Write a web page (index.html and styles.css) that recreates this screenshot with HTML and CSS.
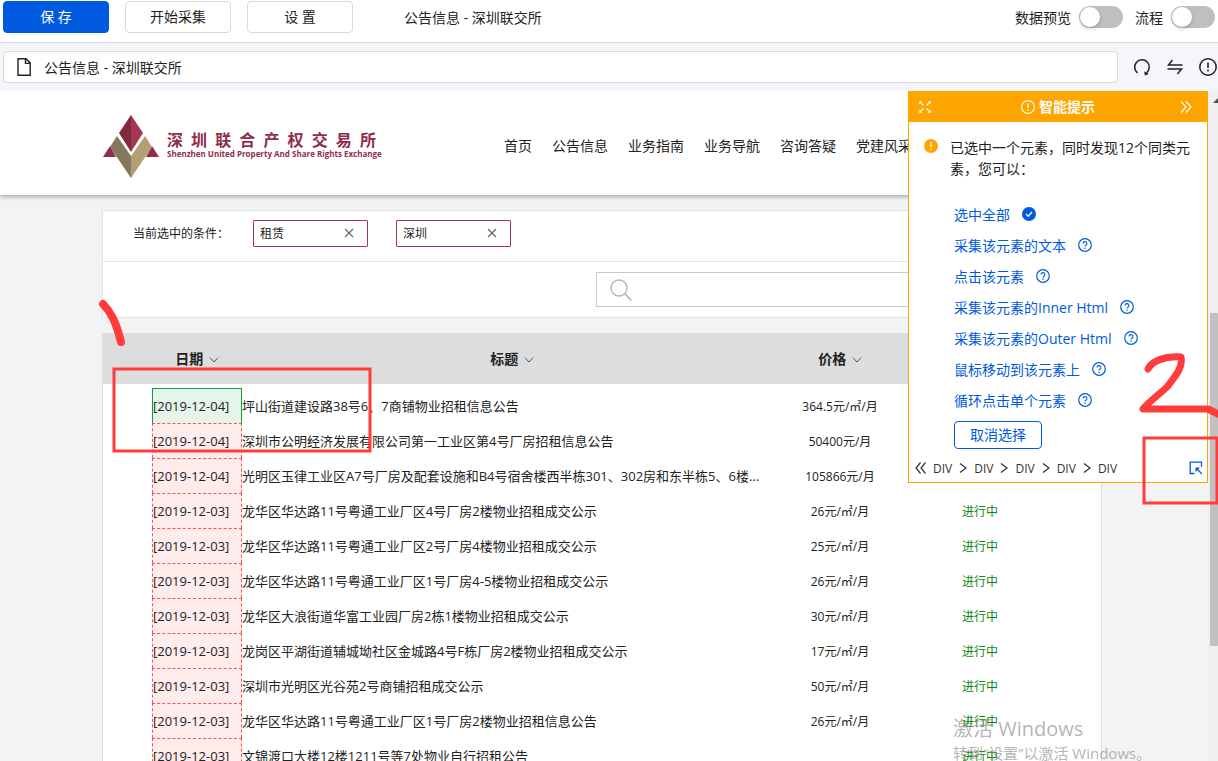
FILE: index.html
```html
<!DOCTYPE html>
<html lang="zh-CN">
<head>
    <meta charset="UTF-8">
    <meta name="viewport" content="width=device-width, initial-scale=1.0">
    <link rel="stylesheet" href="styles.css">
    <title>公告信息 - 深圳联交所</title>
</head>
<body>

    <svg class="sprite" aria-hidden="true">
        <symbol id="help" viewBox="0 0 14 14">
            <circle cx="7" cy="7" r="6.3" fill="none" stroke="currentColor" stroke-width="1.2"/>
            <path d="M5.1 5.6a1.9 1.9 0 1 1 2.8 1.6c-.6.3-.9.6-.9 1.3" fill="none" stroke="currentColor" stroke-width="1.1"/>
            <circle cx="7" cy="10.2" r=".75" fill="currentColor"/>
        </symbol>
        <symbol id="down" viewBox="0 0 10 6">
            <path d="M1 .7l4 4.3 4-4.3" fill="none" stroke="currentColor"/>
        </symbol>
        <symbol id="close" viewBox="0 0 10 10">
            <path d="M1 1l8 8M9 1L1 9" fill="none" stroke="currentColor" stroke-width="1.2"/>
        </symbol>
        <symbol id="next" viewBox="0 0 8 12">
            <path d="M1 1.5L7 6l-6 4.5" fill="none" stroke="currentColor" stroke-width="1.3"/>
        </symbol>
    </svg>

    <header class="toolbar">
        <button class="btn btn-primary">保 存</button>
        <button class="btn">开始采集</button>
        <button class="btn">设 置</button>
        <span class="task-name">公告信息 - 深圳联交所</span>
        <div class="switches">
            <label class="switch">数据预览 <input type="checkbox"></label>
            <label class="switch">流程 <input type="checkbox"></label>
        </div>
    </header>

    <div class="address-bar">
        <div class="address">
            <svg width="16" height="20" viewBox="0 0 16 20">
                <path d="M2 1.7h8l4.2 4.2v12.4H2z M9.5 1.7v4.7h4.7" fill="none" stroke="#222" stroke-width="1.4"/>
            </svg>
            <input type="text" aria-label="网址" value="公告信息 - 深圳联交所">
        </div>
        <button class="icon-btn" aria-label="刷新">
            <svg width="18" height="18" viewBox="0 0 18 18">
                <path d="M4.6 15A7.3 7.3 0 1 1 13.6 14.800" fill="none" stroke="#222" stroke-width="1.5"/>
                <path d="M11.200 13.200l.6 4.200 4-1.400z" fill="#222"/>
            </svg>
        </button>
        <button class="icon-btn" aria-label="切换">
            <svg width="18" height="18" viewBox="0 0 18 18">
                <path d="M16.500 7H2.500L6.500 2M1.500 11H15.500l-4 5" fill="none" stroke="#222" stroke-width="1.5"/>
            </svg>
        </button>
        <button class="icon-btn" aria-label="提示">
            <svg width="18" height="18" viewBox="0 0 18 18">
                <circle cx="9" cy="9" r="8.2" fill="none" stroke="#222" stroke-width="1.5"/>
                <path d="M9 4.500v5.600M9 11.600v1.800" stroke="#222" stroke-width="1.6"/>
            </svg>
        </button>
    </div>

    <div class="browser">
        <main class="site">
            <div class="site-header">
                <div class="wrap">
                    <a class="logo" href="#">
                        <svg width="56" height="64" viewBox="0 0 56 64">
                            <path d="M28 0v37L16 18z" fill="#7e2b3e"/>
                            <path d="M28 0v37l12-19z" fill="#a33755"/>
                            <path d="M7 31L0 42h13z M49 31l7 11H43z" fill="#8f2d4a"/>
                            <path d="M14 21l14 20v22L7 32z" fill="#85775c"/>
                            <path d="M42 21L28 41v22l21-31z" fill="#b39e76"/>
                        </svg>
                        <span class="logo-text">
                            <span class="logo-cn"><b>深</b><b>圳</b><b>联</b><b>合</b><b>产</b><b>权</b><b>交</b><b>易</b><b>所</b></span>
                            <span class="logo-en">Shenzhen United Property And Share Rights Exchange</span>
                        </span>
                    </a>
                    <nav class="site-nav">
                        <a href="#">首页</a>
                        <a href="#">公告信息</a>
                        <a href="#">业务指南</a>
                        <a href="#">业务导航</a>
                        <a href="#">咨询答疑</a>
                        <a href="#">党建风采</a>
                    </nav>
                </div>
            </div>

            <section class="wrap filters">
                <div class="filter-row">
                    <span class="filter-label">当前选中的条件：</span>
                    <button class="tag">租赁 <svg width="10" height="10"><use href="#close"/></svg></button>
                    <button class="tag">深圳 <svg width="10" height="10"><use href="#close"/></svg></button>
                </div>
                <div class="search-row">
                    <div class="search">
                        <svg width="22" height="22" viewBox="0 0 22 22">
                            <circle cx="9" cy="9" r="8" fill="none" stroke="#b5b8bb" stroke-width="1.5"/>
                            <path d="M14.600 14.600L21.300 21.300" stroke="#b5b8bb" stroke-width="1.7"/>
                        </svg>
                        <input type="search" aria-label="搜索">
                    </div>
                </div>
            </section>

            <table class="wrap notices">
                <thead>
                    <tr>
                        <th class="col-date">日期 <svg width="10" height="6"><use href="#down"/></svg></th>
                        <th class="col-title">标题 <svg width="10" height="6"><use href="#down"/></svg></th>
                        <th class="col-price">价格 <svg width="10" height="6"><use href="#down"/></svg></th>
                        <th class="col-status"></th>
                    </tr>
                </thead>
                <tbody>
                    <tr><td class="col-date"><div class="date selected">[2019-12-04]</div></td><td class="col-title">坪山街道建设路38号6、7商铺物业招租信息公告</td><td class="col-price">364.5元/㎡/月</td><td class="col-status"></td></tr>
                    <tr><td class="col-date"><div class="date">[2019-12-04]</div></td><td class="col-title">深圳市公明经济发展有限公司第一工业区第4号厂房招租信息公告</td><td class="col-price">50400元/月</td><td class="col-status"></td></tr>
                    <tr><td class="col-date"><div class="date">[2019-12-04]</div></td><td class="col-title">光明区玉律工业区A7号厂房及配套设施和B4号宿舍楼西半栋301、302房和东半栋5、6楼...</td><td class="col-price">105866元/月</td><td class="col-status"></td></tr>
                    <tr><td class="col-date"><div class="date">[2019-12-03]</div></td><td class="col-title">龙华区华达路11号粤通工业厂区4号厂房2楼物业招租成交公示</td><td class="col-price">26元/㎡/月</td><td class="col-status">进行中</td></tr>
                    <tr><td class="col-date"><div class="date">[2019-12-03]</div></td><td class="col-title">龙华区华达路11号粤通工业厂区2号厂房4楼物业招租成交公示</td><td class="col-price">25元/㎡/月</td><td class="col-status">进行中</td></tr>
                    <tr><td class="col-date"><div class="date">[2019-12-03]</div></td><td class="col-title">龙华区华达路11号粤通工业厂区1号厂房4-5楼物业招租成交公示</td><td class="col-price">26元/㎡/月</td><td class="col-status">进行中</td></tr>
                    <tr><td class="col-date"><div class="date">[2019-12-03]</div></td><td class="col-title">龙华区大浪街道华富工业园厂房2栋1楼物业招租成交公示</td><td class="col-price">30元/㎡/月</td><td class="col-status">进行中</td></tr>
                    <tr><td class="col-date"><div class="date">[2019-12-03]</div></td><td class="col-title">龙岗区平湖街道辅城坳社区金城路4号F栋厂房2楼物业招租成交公示</td><td class="col-price">17元/㎡/月</td><td class="col-status">进行中</td></tr>
                    <tr><td class="col-date"><div class="date">[2019-12-03]</div></td><td class="col-title">深圳市光明区光谷苑2号商铺招租成交公示</td><td class="col-price">50元/㎡/月</td><td class="col-status">进行中</td></tr>
                    <tr><td class="col-date"><div class="date">[2019-12-03]</div></td><td class="col-title">龙华区华达路11号粤通工业厂区1号厂房2楼物业招租信息公告</td><td class="col-price">26元/㎡/月</td><td class="col-status">进行中</td></tr>
                    <tr><td class="col-date"><div class="date">[2019-12-03]</div></td><td class="col-title">文锦渡口大楼12楼1211号等7处物业自行招租公告</td><td class="col-price"></td><td class="col-status">进行中</td></tr>
                </tbody>
            </table>

            <aside class="tips">
                <div class="tips-header">
                    <button aria-label="缩小">
                        <svg width="14" height="14" viewBox="0 0 14 14" fill="none" stroke="#fff" stroke-width="1.200">
                            <path d="M2 2l3.500 3.500M12 2L8.500 5.500M2 12l3.500-3.500M12 12L8.500 8.500"/>
                            <path d="M1.500 4V1.500H4M10 1.500h2.500V4M1.500 10v2.500H4M10 12.500h2.500V10" stroke-opacity=".6"/>
                        </svg>
                    </button>
                    <span class="tips-title">
                        <svg width="14" height="14" viewBox="0 0 14 14">
                            <circle cx="7" cy="7" r="6.4" fill="none" stroke="#fff" stroke-width="1.100"/>
                            <path d="M7 3.500v4.500M7 9.200v1.500" stroke="#fff" stroke-width="1.200"/>
                        </svg>
                        智能提示
                    </span>
                    <button aria-label="收起">
                        <svg width="12" height="12" viewBox="0 0 12 12">
                            <path d="M1 .5L6 6l-5 5.500M6 .5L11 6l-5 5.500" fill="none" stroke="#fff" stroke-width="1.200"/>
                        </svg>
                    </button>
                </div>
                <div class="tips-message">
                    <svg width="14" height="14" viewBox="0 0 14 14">
                        <circle cx="7" cy="7" r="7" fill="#ffa500"/>
                        <path d="M7 3v5M7 9.500v1.500" stroke="#fff" stroke-width="1.300"/>
                    </svg>
                    <p>已选中一个元素，同时发现12个同类元素，您可以：</p>
                </div>
                <ul class="tips-list">
                    <li>
                        <a href="#">选中全部</a>
                        <svg width="14" height="14" viewBox="0 0 14 14">
                            <circle cx="7" cy="7" r="7" fill="currentColor"/>
                            <path d="M4 7l2.300 2.300L10 5" fill="none" stroke="#fff" stroke-width="1.400"/>
                        </svg>
                    </li>
                    <li><a href="#">采集该元素的文本</a> <svg width="14" height="14"><use href="#help"/></svg></li>
                    <li><a href="#">点击该元素</a> <svg width="14" height="14"><use href="#help"/></svg></li>
                    <li><a href="#">采集该元素的Inner Html</a> <svg width="14" height="14"><use href="#help"/></svg></li>
                    <li><a href="#">采集该元素的Outer Html</a> <svg width="14" height="14"><use href="#help"/></svg></li>
                    <li><a href="#">鼠标移动到该元素上</a> <svg width="14" height="14"><use href="#help"/></svg></li>
                    <li><a href="#">循环点击单个元素</a> <svg width="14" height="14"><use href="#help"/></svg></li>
                </ul>
                <button class="cancel">取消选择</button>
                <div class="dom-path">
                    <svg width="11" height="12" viewBox="0 0 11 12">
                        <path d="M5.500 .5L1 6l4.500 5.500M10.500 .5L6 6l4.500 5.500" fill="none" stroke="currentColor" stroke-width="1.200"/>
                    </svg>
                    <span>DIV</span>
                    <svg width="8" height="12"><use href="#next"/></svg>
                    <span>DIV</span>
                    <svg width="8" height="12"><use href="#next"/></svg>
                    <span>DIV</span>
                    <svg width="8" height="12"><use href="#next"/></svg>
                    <span>DIV</span>
                    <svg width="8" height="12"><use href="#next"/></svg>
                    <span>DIV</span>
                    <button class="expand" aria-label="扩大选区">
                        <svg width="14" height="14" viewBox="0 0 14 14">
                            <path d="M5.500 12.500H1.200V1.200h11.300v4.500" fill="none" stroke="currentColor" stroke-width="1.300"/>
                            <path d="M7.500 7.500l5.500 5.500" fill="none" stroke="currentColor" stroke-width="1.300"/>
                            <path d="M6.500 6.500h4.500l-4.500 4.500z" fill="currentColor"/>
                        </svg>
                    </button>
                </div>
            </aside>
        </main>

        <div class="scrollbar">
            <svg width="10" height="5" viewBox="0 0 10 5"><path d="M3 5l5-5 2 2v3z" fill="#505050"/></svg>
            <div class="thumb"></div>
        </div>
    </div>

    <div class="watermark">
        <div class="watermark-title">激活 Windows</div>
        <div>转到“设置”以激活 Windows。</div>
    </div>

    <!-- hand-drawn marks over the page -->
    <svg class="marks" width="1218" height="761" fill="none" stroke="#ff3b3b">
        <path d="M103 304C111 312 116 322 121 342" stroke-width="8" stroke-linecap="round"/>
        <rect x="114" y="369" width="256" height="82" stroke-width="3"/>
        <path d="M1148 369C1152 361 1164 356 1181 357C1183 366 1178 373 1167 387C1157 396 1148 403 1143 409H1208L1218 414" stroke-width="7" stroke-linecap="round" stroke-linejoin="round"/>
        <rect x="1144" y="438" width="73" height="65" stroke-width="3"/>
    </svg>

</body>
</html>
```
FILE: styles.css
```css
* {
    box-sizing: border-box;
}

body {
    margin: 0;
    height: 100vh;
    display: flex;
    flex-direction: column;
    overflow: hidden;
    position: relative;
    font-family: "Open Sans", "Noto Sans CJK SC", sans-serif;
    font-size: 14px;
    color: #222;
    background-color: #fff;
}

button, input {
    font: inherit;
    color: inherit;
}

button {
    padding: 0;
    border: none;
    background: none;
    cursor: pointer;
}

svg {
    flex: none;
}

a {
    color: inherit;
    text-decoration: none;
}

.sprite {
    display: none;
}

/* top toolbar */
.toolbar {
    flex: none;
    display: flex;
    align-items: center;
    gap: 16px;
    height: 43px;
    padding: 0 3px 8px;
    border-bottom: 1px solid #d9d9d9;
}

.btn {
    width: 106px;
    height: 32px;
    padding-bottom: 2px;
    border: 1px solid #d9d9d9;
    border-radius: 4px;
    background-color: #fff;
}

.btn-primary {
    color: #fff;
    border-color: #005ae0;
    background-color: #005ae0;
}

.task-name {
    margin-left: 35px;
}

.switches {
    display: flex;
    gap: 12px;
    margin-left: auto;
}

.switch {
    display: flex;
    align-items: center;
    gap: 8px;
}

.switch input {
    appearance: none;
    width: 44px;
    height: 22px;
    margin: 0;
    padding: 1px;
    border-radius: 11px;
    background-color: #bfbfbf;
}

.switch input::before {
    content: "";
    display: block;
    width: 20px;
    height: 20px;
    border-radius: 50%;
    background-color: #fff;
    box-shadow: 0 2px 4px rgba(0, 35, 11, 0.2);
}

.switch input:checked {
    background-color: #005ae0;
}

/* address bar */
.address-bar {
    flex: none;
    display: flex;
    align-items: center;
    gap: 15px;
    height: 48px;
    padding: 0 1px 0 3px;
    background-color: #f5f6fb;
}

.address {
    flex: 1;
    display: flex;
    align-items: center;
    gap: 12px;
    height: 32px;
    padding: 0 12px;
    border: 1px solid #d9d9d9;
    border-radius: 4px;
    background-color: #fff;
}

.address input {
    flex: 1;
    padding: 0;
    border: none;
    outline: none;
    background: none;
}

.icon-btn {
    display: flex;
}

/* embedded browser */
.browser {
    flex: 1;
    display: flex;
    min-height: 0;
}

.site {
    flex: 1;
    position: relative;
    overflow: hidden;
    padding-right: 4px;
    background-color: #f3f3f3;
}

.wrap {
    width: calc(100% - 204px);
    max-width: 1000px;
    margin: 0 auto;
}

.site-header {
    height: 104px;
    margin: 0 -4px 15px 0;
    padding-right: 4px;
    background-color: #fff;
    box-shadow: 0 1px 5px rgba(0, 0, 0, 0.4);
}

.site-header .wrap {
    display: flex;
    align-items: center;
    height: 100%;
    padding-top: 8px;
}

.logo {
    display: flex;
    align-items: center;
    gap: 8px;
    margin-left: 1px;
    color: #8f2d4a;
}

.logo-text {
    width: 213px;
    padding-bottom: 2px;
}

.logo-cn {
    display: flex;
    justify-content: space-between;
    padding-right: 4px;
    font-size: 16px;
    line-height: 16px;
}

.logo-en {
    display: block;
    font-size: 8px;
    font-weight: bold;
    line-height: 12px;
    white-space: nowrap;
}

.site-nav {
    display: flex;
    gap: 20px;
    margin-left: 124px;
    padding-bottom: 4px;
    white-space: nowrap;
}

.filters {
    margin-bottom: 15px;
    border: 1px solid #e3e3e3;
    background-color: #fff;
}

.filter-row {
    display: flex;
    align-items: center;
    gap: 28px;
    height: 51px;
    padding: 0 30px 6px;
    border-bottom: 1px solid #e8e8e8;
    font-size: 12px;
}

.filter-label {
    width: 92px;
    white-space: nowrap;
}

.tag {
    display: flex;
    align-items: center;
    justify-content: space-between;
    width: 115px;
    height: 27px;
    padding: 0 13px 0 6px;
    border: 1px solid #a33755;
    border-radius: 1px;
    background-color: #fff;
}

.tag svg {
    color: #666;
}

.search-row {
    display: flex;
    justify-content: flex-end;
    padding: 10px;
}

.search {
    display: flex;
    align-items: center;
    gap: 10px;
    width: 495px;
    height: 35px;
    padding: 0 13px;
    border: 1px solid #c8c8c8;
}

.search input {
    flex: 1;
    border: none;
    outline: none;
}

/* notice table */
.notices {
    table-layout: fixed;
    border-spacing: 0;
    border: 1px solid #ddd;
    background-color: #fff;
    font-size: 13px;
}

.notices th {
    height: 50px;
    padding: 0 0 2px;
    font-size: 14px;
    background-color: #ddd;
}

.notices th svg {
    margin: 0 0 1px 2px;
    color: #555;
}

.notices tbody::before {
    content: "";
    display: block;
    height: 4px;
}

.notices td {
    height: 35px;
    padding: 0;
    text-align: center;
    white-space: nowrap;
}

.notices .col-date {
    width: 139px;
    padding-left: 49px;
}

.notices td.col-title {
    padding-right: 20px;
    text-align: left;
    overflow: hidden;
    text-overflow: ellipsis;
}

.notices .col-price {
    width: 116px;
}

.notices td.col-price {
    font-size: 12px;
}

.notices .col-status {
    width: 203px;
    padding-right: 39px;
    color: #0a8a0a;
    font-size: 12px;
}

.date {
    height: 35px;
    border: 1px dashed #ff5050;
    border-bottom: none;
    background-color: #ffecec;
    line-height: 34px;
    text-align: left;
}

.date.selected {
    border: 1px solid #0aa03c;
    border-bottom: none;
    background-color: #e6f5ea;
}

/* tips panel */
.tips {
    position: absolute;
    top: 0;
    right: 0;
    width: 300px;
    border: 1px solid #ffa500;
    background-color: #fff;
}

.tips-header {
    display: flex;
    align-items: center;
    justify-content: space-between;
    height: 30px;
    padding: 0 15px 0 9px;
    color: #fff;
    background-color: #ffa500;
}

.tips-header button {
    display: flex;
}

.tips-title {
    display: flex;
    align-items: center;
    gap: 4px;
    margin-left: 4px;
    line-height: 18px;
    font-weight: bold;
}

.tips-message {
    display: flex;
    gap: 12px;
    padding: 15px 17px 0 15px;
    line-height: 21px;
}

.tips-message svg {
    margin-top: 2px;
}

.tips-message p {
    margin: 0;
}

.tips-list {
    margin: 19px 0 6px;
    padding: 0 0 0 45px;
    list-style: none;
    color: #005ae0;
}

.tips-list li {
    display: flex;
    align-items: center;
    gap: 12px;
    height: 31px;
}

.cancel {
    width: 88px;
    height: 28px;
    margin-left: 45px;
    padding-bottom: 2px;
    border: 1px solid #005ae0;
    border-radius: 4px;
    color: #005ae0;
}

.dom-path {
    display: flex;
    align-items: center;
    gap: 7px;
    height: 33px;
    padding: 5px 4px 0 6px;
    font-size: 12px;
    color: #333;
}

.expand {
    display: flex;
    margin-left: auto;
    color: #005ae0;
}

/* scrollbar */
.scrollbar {
    width: 10px;
    padding: 7px 0 0 2px;
    background-color: #f0f0f0;
}

.scrollbar svg {
    display: block;
}

.thumb {
    height: 333px;
    margin-top: 210px;
    background-color: #c1c1c1;
}

.watermark {
    position: absolute;
    left: 953px;
    top: 715px;
    font-size: 15px;
    line-height: 20px;
    color: rgba(130, 130, 130, 0.6);
    white-space: nowrap;
}

.watermark-title {
    font-size: 20px;
    line-height: 28px;
}

.marks {
    position: absolute;
    top: 0;
    left: 0;
    pointer-events: none;
}
```
